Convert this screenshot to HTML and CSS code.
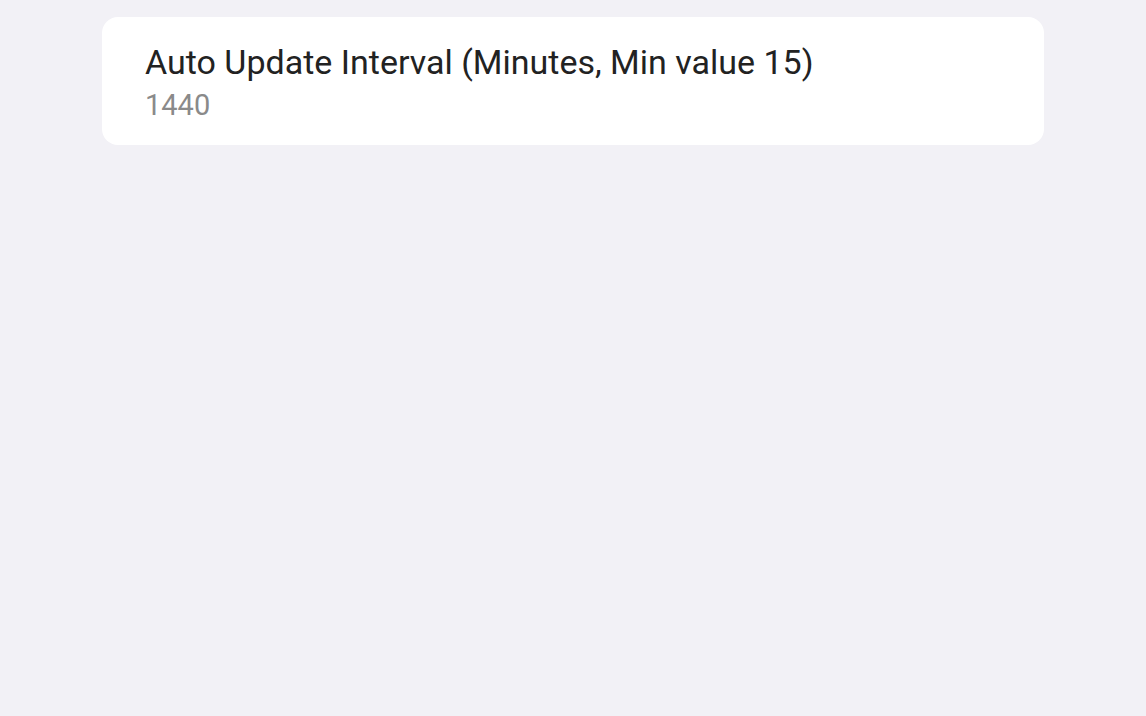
FILE: index.html
```html
<!DOCTYPE html>
<html lang="en">
<head>
    <meta charset="UTF-8">
    <meta name="viewport" content="width=device-width, initial-scale=1.0">
    <title>Settings</title>
    <link rel="stylesheet" href="styles.css">
</head>
<body>
    <div class="settings">
        <div class="card">
            <div class="item-title">Auto Update Interval (Minutes, Min value 15)</div>
            <div class="item-value">1440</div>
        </div>
    </div>
</body>
</html>
```

FILE: styles.css
```css
html, body {
    margin: 0;
    padding: 0;
    height: 100%;
}
body {
    font-family: Roboto, "Noto Sans", sans-serif;
    background-color: #f2f1f6;
}
.settings {
    padding: 17px 102px 0 102px;
}
.card {
    background: #ffffff;
    border-radius: 16px;
    height: 128px;
    box-sizing: border-box;
    padding: 25px 43px 0 43px;
}
.item-title {
    font-size: 34px;
    line-height: 40px;
    color: #222222;
}
.item-value {
    font-size: 29px;
    line-height: 34px;
    color: #8a8a8a;
    margin-top: 6px;
}
```
